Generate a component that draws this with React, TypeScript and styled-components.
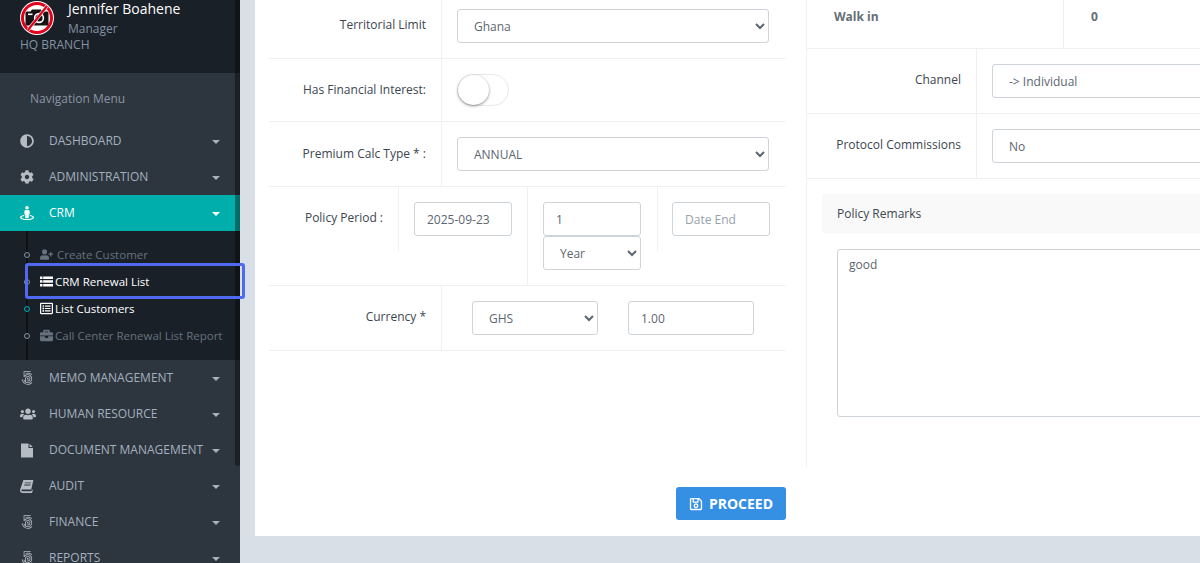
import React from "react";
import styled, { createGlobalStyle } from "styled-components";
import { FaAdjust, FaCog, FaStreetView, FaUserPlus, FaRegListAlt, FaBriefcase, FaUsers, Fa500Px, FaRegSave } from "react-icons/fa";

const Global = createGlobalStyle`
  html, body { margin: 0; padding: 0; height: 563px; overflow: hidden; background: #d9dfe7; }
  body, select, input, textarea, button { font-family: "Open Sans", "Noto Sans", sans-serif; }
  *, *::before, *::after { box-sizing: border-box; }
`;

const Page = styled.div`display: flex; width: 1200px; height: 563px; overflow: hidden;`;

const Sidebar = styled.aside`position: relative; flex: 0 0 240px; width: 240px; height: 563px; background: #2d353e; z-index: 2;`;
const Thumb = styled.div`position: absolute; top: 0; right: 0; width: 5px; height: 466px; background: rgba(0,0,0,.38); border-radius: 0 0 3px 3px; pointer-events: none;`;

const UserBlock = styled.div`height: 73px; background: #1a2028; padding: 0 0 0 20px; overflow: hidden;`;
const UserRow = styled.div`display: flex; gap: 14px; margin-top: 1px;`;
const UserText = styled.div`display: flex; flex-direction: column; margin-top: -2px;`;
const UserName = styled.div`color: #fff; font-size: 14px; line-height: 20px;`;
const UserRole = styled.div`color: #8393a3; font-size: 12px; line-height: 18px; margin-top: 1px;`;
const Branch = styled.div`color: #8393a3; font-size: 12px; line-height: 16px; margin-top: -1px;`;
const NavTitle = styled.div`height: 50px; padding-left: 30px; display: flex; align-items: center; color: #8a96a3; font-size: 12px;`;

const Item = styled.div<{ $active?: boolean }>`
  height: 36px; display: flex; align-items: center; padding-left: 20px; padding-right: 20px;
  background: ${p => (p.$active ? "#00aeac" : "transparent")};
  color: ${p => (p.$active ? "#fff" : "#a3b1bf")};
  font-size: 12px;
`;
const ItemIcon = styled.span<{ $active?: boolean; $size?: number }>`
  flex: 0 0 29px; display: flex; align-items: center; font-size: ${p => p.$size ?? 14}px;
  color: ${p => (p.$active ? "#fff" : "#b5bcc4")};
`;
const ItemLabel = styled.span`flex: 1; white-space: nowrap; margin-top: -2px;`;
const Caret = styled.span`width: 0; height: 0; border-left: 4px solid transparent; border-right: 4px solid transparent; border-top: 4px solid currentColor; margin-top: 2px;`;

const Sub = styled.div`background: #1a2028; height: 129px; padding-top: 10px; position: relative;`;
const SubLine = styled.div`position: absolute; left: 26px; top: 0; bottom: 0; width: 2px; background: #0d1116;`;
const SubItem = styled.div<{ $on?: boolean; $focus?: boolean }>`
  position: relative; height: 27px; display: flex; align-items: center; padding-left: 40px;
  font-size: 11.5px; white-space: nowrap;
  color: ${p => (p.$on ? "#fff" : "#66727e")};
  &::before {
    content: ""; position: absolute; left: 24px; top: 11px; width: 6px; height: 6px; border-radius: 50%;
    background: #1a2028; border: 1px solid ${p => (p.$on && !p.$focus ? "#00aeac" : "#8393a3")};
  }
  ${p => p.$focus ? `&::after { content: ""; position: absolute; left: 25px; top: -5px; width: 220px; height: 36px; border: 3px solid #4f6af0; border-radius: 3px; z-index: 3; }` : ""}
`;
const SubIcon = styled.span<{ $w: number }>`flex: 0 0 ${p => p.$w}px; display: flex; align-items: center; font-size: 13px;`;

const Main = styled.main`flex: 1; min-width: 0; padding-left: 15px; overflow: hidden;`;
const Card = styled.div`width: 1100px; height: 536px; background: #fff; padding: 0 0 0 14px; display: flex; flex-direction: column; overflow: hidden;`;
const Columns = styled.div`display: flex; margin-top: -6px; gap: 20px; height: 473px;`;
const LeftCol = styled.div`flex: 0 0 517px; width: 517px;`;
const RightCol = styled.div`flex: 1; border-left: 1px solid #eef0f2;`;

const Row = styled.div<{ $h: number }>`display: flex; height: ${p => p.$h}px; border-bottom: 1px solid #eef0f2;`;
const LabelCell = styled.div<{ $w: number; $top?: number }>`
  flex: 0 0 ${p => p.$w}px; width: ${p => p.$w}px; padding: ${p => p.$top ?? 23}px 15px 0 0; text-align: right;
  font-size: 12px; line-height: 16px; color: #3c4650; border-right: 1px solid #eef0f2;
`;
const FieldCell = styled.div<{ $pad?: number }>`flex: 1; padding: 15px 0 0 ${p => p.$pad ?? 15}px; display: flex; gap: 30px;`;

const baseField = `
  height: 34px; border: 1px solid #ced4da; border-radius: 3px; background: #fff; color: #5c6670;
  font-size: 12px; padding: 0 16px; outline: none;
`;
const Select = styled.select<{ $w: number }>`${baseField} width: ${p => p.$w}px; flex: none; padding-left: 12px;`;
const Input = styled.input<{ $w: number }>`${baseField} width: ${p => p.$w}px; flex: none; padding-left: 12px; &::placeholder { color: #97a1ab; opacity: 1; }`;

const Toggle = styled.div`width: 52px; height: 32px; border: 1px solid #e6e8ea; border-radius: 16px; background: #fff; position: relative;`;
const Knob = styled.div`position: absolute; left: 0; top: 0; width: 31px; height: 30px; border-radius: 50%; background: #fff; box-shadow: 0 1px 3px rgba(0,0,0,.45);`;

const PeriodRow = styled.div`display: flex; height: 99px; border-bottom: 1px solid #eef0f2;`;
const PeriodLabel = styled(LabelCell)`height: 64px;`;
const PeriodCell = styled.div<{ $w: number; $tall?: boolean; $last?: boolean }>`
  flex: 0 0 ${p => p.$w}px; width: ${p => p.$w}px; padding: 15px 0 0 ${p => (p.$last ? 14 : 15)}px; display: flex; flex-direction: column;
  height: ${p => (p.$tall ? "98px" : "64px")};
  border-right: ${p => (p.$last ? "0" : "1px solid #eef0f2")};
`;

const WalkRow = styled.div`display: flex; height: 55px; border-bottom: 1px solid #eef0f2; font-size: 12px; font-weight: 700; color: #666e76;`;
const WalkName = styled.div`flex: 0 0 257px; padding: 15px 0 0 27px; border-right: 1px solid #eef0f2; line-height: 16px;`;
const WalkValue = styled.div`padding: 15px 0 0 27px; line-height: 16px;`;
const RemarksWrap = styled.div`padding: 15px 0 0 15px;`;
const RemarksHead = styled.div`height: 39px; background: #f9f9f9; padding-left: 15px; display: flex; align-items: center; font-size: 12px; color: #3c4650; border-radius: 2px;`;
const Textarea = styled.textarea`
  display: block; margin: 16px 0 0 30px; width: 560px; height: 168px; border: 1px solid #ced4da; border-radius: 3px;
  padding: 7px 11px; font-size: 12px; line-height: 16px; color: #5c6670; resize: none; outline: none;
`;

const Footer = styled.div`width: 517px; display: flex; justify-content: flex-end; padding-top: 20px;`;
const Proceed = styled.button`
  width: 110px; height: 33px; border: 0; border-radius: 3px; background: #3590e3; color: #fff;
  font-size: 14px; font-weight: 700; display: flex; align-items: center; justify-content: center; gap: 6px; padding: 0;
`;

const NoCamera = () => (
  <svg width="34" height="36" viewBox="0 0 34 36" style={{ flex: "0 0 34px" }}>
    <circle cx="17" cy="17" r="17" fill="#fff" />
    <circle cx="17" cy="17" r="16" fill="#e3001b" />
    <circle cx="17" cy="17" r="13" fill="#fff" />
    <path d="M5.5 12a1.5 1.5 0 0 1 1.5-1.5h3.5l1.5-2h9l1.5 2H27A1.5 1.5 0 0 1 28.5 12v11a1.5 1.5 0 0 1-1.5 1.5H7A1.5 1.5 0 0 1 5.5 23z" fill="#141414" />
    <circle cx="19" cy="17" r="5.2" fill="#fff" />
    <circle cx="19" cy="17" r="3.6" fill="#141414" />
    <rect x="8" y="12.5" width="4.5" height="1.6" fill="#fff" />
    <line x1="8" y1="29" x2="27" y2="5" stroke="#fff" strokeWidth="3.4" />
    <line x1="8" y1="29" x2="27" y2="5" stroke="#e3001b" strokeWidth="2.2" />
  </svg>
);

const BookIcon = () => (
  <svg width="14" height="14" viewBox="0 0 14 14" fill="currentColor">
    <path d="M3.4 1h10l-2.2 9.6H2.2c-.5 0-.8.3-.8.8s.4.9.9.9h9.2l.4-1.8.9.4-.8 3H2.2C1 13.9 0 12.9 0 11.6c0-.4.1-.8.2-1.2z" />
    <path d="M4.8 3.4h6.2v.9H4.6zM4.3 5.5h6.2v.9H4.1z" fill="#2d353e" />
  </svg>
);

const FileIcon = () => (
  <svg width="14" height="15" viewBox="0 0 14 15" fill="currentColor">
    <path d="M1 .5h7.5v4.5H13v9.5H1z" />
    <path d="M9.5.7 12.8 4H9.5z" />
  </svg>
);

const ListIcon = () => (
  <svg width="13" height="11" viewBox="0 0 13 11" fill="currentColor">
    <rect x="0" y="0.5" width="2.5" height="2.5" />
    <rect x="3.2" y="0.5" width="9.8" height="2.5" />
    <rect x="0" y="4.2" width="2.5" height="2.5" />
    <rect x="3.2" y="4.2" width="9.8" height="2.5" />
    <rect x="0" y="8" width="2.5" height="2.5" />
    <rect x="3.2" y="8" width="9.8" height="2.5" />
  </svg>
);

const topItems = [
  { icon: <FaAdjust />, label: "DASHBOARD" },
  { icon: <FaCog />, label: "ADMINISTRATION" },
];
const bottomItems = [
  { icon: <Fa500Px />, label: "MEMO MANAGEMENT" },
  { icon: <FaUsers />, label: "HUMAN RESOURCE", size: 16 },
  { icon: <FileIcon />, label: "DOCUMENT MANAGEMENT" },
  { icon: <BookIcon />, label: "AUDIT" },
  { icon: <Fa500Px />, label: "FINANCE" },
  { icon: <Fa500Px />, label: "REPORTS" },
];

const NavItem = ({ icon, label, active, size }: { icon: React.ReactNode; label: string; active?: boolean; size?: number }) => (
  <Item $active={active}>
    <ItemIcon $active={active} $size={size}>{icon}</ItemIcon>
    <ItemLabel>{label}</ItemLabel>
    <Caret />
  </Item>
);

const Opt = ({ children, w }: { children: string; w: number }) => (
  <Select $w={w} defaultValue={children}><option>{children}</option></Select>
);

export default function App() {
  return (
    <Page>
      <Global />
      <Sidebar>
        <UserBlock>
          <UserRow>
            <NoCamera />
            <UserText>
              <UserName>Jennifer Boahene</UserName>
              <UserRole>Manager</UserRole>
            </UserText>
          </UserRow>
          <Branch>HQ BRANCH</Branch>
        </UserBlock>
        <NavTitle>Navigation Menu</NavTitle>
        {topItems.map(i => <NavItem key={i.label} {...i} />)}
        <NavItem icon={<FaStreetView />} label="CRM" active />
        <Sub>
          <SubLine />
          <SubItem><SubIcon $w={17}><FaUserPlus /></SubIcon>Create Customer</SubItem>
          <SubItem $on $focus><SubIcon $w={15}><ListIcon /></SubIcon>CRM Renewal List</SubItem>
          <SubItem $on><SubIcon $w={15}><FaRegListAlt /></SubIcon>List Customers</SubItem>
          <SubItem><SubIcon $w={15}><FaBriefcase /></SubIcon>Call Center Renewal List Report</SubItem>
        </Sub>
        {bottomItems.map(i => <NavItem key={i.label} {...i} />)}
        <Thumb />
      </Sidebar>
      <Main>
        <Card>
          <Columns>
            <LeftCol>
              <Row $h={65}>
                <LabelCell $w={173}>Territorial Limit</LabelCell>
                <FieldCell><Opt w={312}>Ghana</Opt></FieldCell>
              </Row>
              <Row $h={63}>
                <LabelCell $w={173}>Has Financial Interest:</LabelCell>
                <FieldCell><Toggle><Knob /></Toggle></FieldCell>
              </Row>
              <Row $h={65}>
                <LabelCell $w={173} $top={24}>Premium Calc Type * :</LabelCell>
                <FieldCell><Opt w={312}>ANNUAL</Opt></FieldCell>
              </Row>
              <PeriodRow>
                <PeriodLabel $w={130}>Policy Period :</PeriodLabel>
                <PeriodCell $w={129} $tall><Input $w={98} defaultValue="2025-09-23" /></PeriodCell>
                <PeriodCell $w={130}>
                  <Input $w={98} defaultValue="1" />
                  <Select $w={98} defaultValue="Year"><option>Year</option></Select>
                </PeriodCell>
                <PeriodCell $w={128} $last><Input $w={98} placeholder="Date End" /></PeriodCell>
              </PeriodRow>
              <Row $h={65}>
                <LabelCell $w={173}>Currency *</LabelCell>
                <FieldCell $pad={30}>
                  <Opt w={126}>GHS</Opt>
                  <Input $w={126} defaultValue="1.00" />
                </FieldCell>
              </Row>
            </LeftCol>
            <RightCol>
              <WalkRow>
                <WalkName>Walk in</WalkName>
                <WalkValue>0</WalkValue>
              </WalkRow>
              <Row $h={65}>
                <LabelCell $w={170}>Channel</LabelCell>
                <FieldCell><Opt w={400}>-&gt; Individual</Opt></FieldCell>
              </Row>
              <Row $h={65}>
                <LabelCell $w={170}>Protocol Commissions</LabelCell>
                <FieldCell><Opt w={400}>No</Opt></FieldCell>
              </Row>
              <RemarksWrap>
                <RemarksHead>Policy Remarks</RemarksHead>
              </RemarksWrap>
              <Textarea defaultValue="good" />
            </RightCol>
          </Columns>
          <Footer>
            <Proceed><FaRegSave />PROCEED</Proceed>
          </Footer>
        </Card>
      </Main>
    </Page>
  );
}
